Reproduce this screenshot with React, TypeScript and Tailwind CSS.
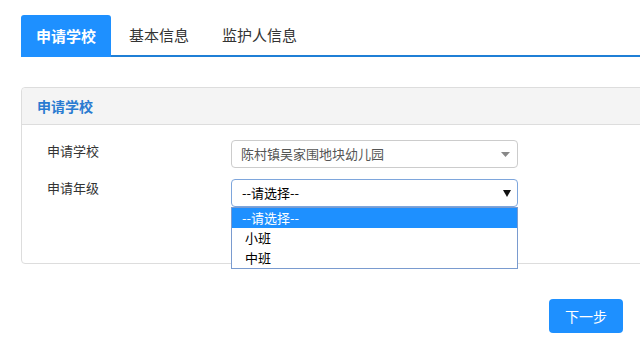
import React from "react";

const font = { fontFamily: '"Noto Sans CJK SC", "Noto Sans", sans-serif' };

export default function App() {
  return (
    <div className="w-[640px] h-[349px] overflow-hidden bg-white relative" style={font}>
      {/* Tabs */}
      <div className="pt-[16px] pl-[21px]">
        <div className="flex items-end border-b-2 border-[#1f7fd6] w-[700px] h-[41px]">
          <div className="w-[90px] flex items-center justify-center bg-[#1e90ff] text-white text-[15px] font-bold rounded-t-[3px] -mb-[2px] h-[42px]">
            申请学校
          </div>
          <div className="h-[39px] flex items-center pl-[18px] pr-[16px] text-[15px] text-[#333]">基本信息</div>
          <div className="h-[39px] flex items-center pl-[17px] pr-[16px] text-[15px] text-[#333]">监护人信息</div>
        </div>
      </div>

      {/* Panel */}
      <div className="mt-[30px] ml-[21px] w-[680px] h-[177px] border border-[#dddddd] rounded-[4px]">
        <div className="h-[37px] bg-[#f4f4f4] border-b border-[#dddddd] flex items-center pl-[15px] text-[14px] font-bold text-[#2a7bd1] rounded-t-[4px]">
          申请学校
        </div>
        <div className="pt-[15px]">
          <div className="flex items-center h-[28px]">
            <div className="w-[209px] pl-[25px] text-[13px] text-[#333] -mt-[7px]">申请学校</div>
            <div className="w-[287px] h-[28px] border border-[#cccccc] rounded-[4px] flex items-center justify-between pl-[9px] pr-[7px] text-[13px] text-[#555]">
              <span>陈村镇吴家围地块幼儿园</span>
              <svg width="9" height="5" viewBox="0 0 9 5"><path d="M0 0h9L4.5 5z" fill="#888" /></svg>
            </div>
          </div>
          <div className="flex items-start mt-[11px]">
            <div className="w-[209px] pl-[25px] text-[13px] text-[#333] -mt-[1px]">申请年级</div>
            <div className="relative">
              <div className="w-[287px] h-[28px] border border-[#7ea6dc] rounded-[4px] flex items-center justify-between pl-[10px] pr-[6px] text-[13px] text-black">
                <span>--请选择--</span>
                <svg width="8" height="8" viewBox="0 0 8 8"><path d="M0 1h8L4 8z" fill="#111" /></svg>
              </div>
              <div className="absolute left-0 top-[28px] w-[287px] h-[62px] bg-white border border-[#7a9bcf] text-[13px] text-black">
                <div className="h-[20px] bg-[#1e90ff] text-white pl-[10px] leading-[20px]">--请选择--</div>
                <div className="h-[20px] pl-[13px] leading-[20px]">小班</div>
                <div className="h-[20px] pl-[13px] leading-[20px]">中班</div>
              </div>
            </div>
          </div>
        </div>
      </div>

      {/* Button */}
      <div className="flex justify-end pr-[17px] mt-[35px]">
        <button className="w-[74px] h-[34px] rounded-[4px] bg-[#1e90ff] text-white text-[14px]">下一步</button>
      </div>
    </div>
  );
}
